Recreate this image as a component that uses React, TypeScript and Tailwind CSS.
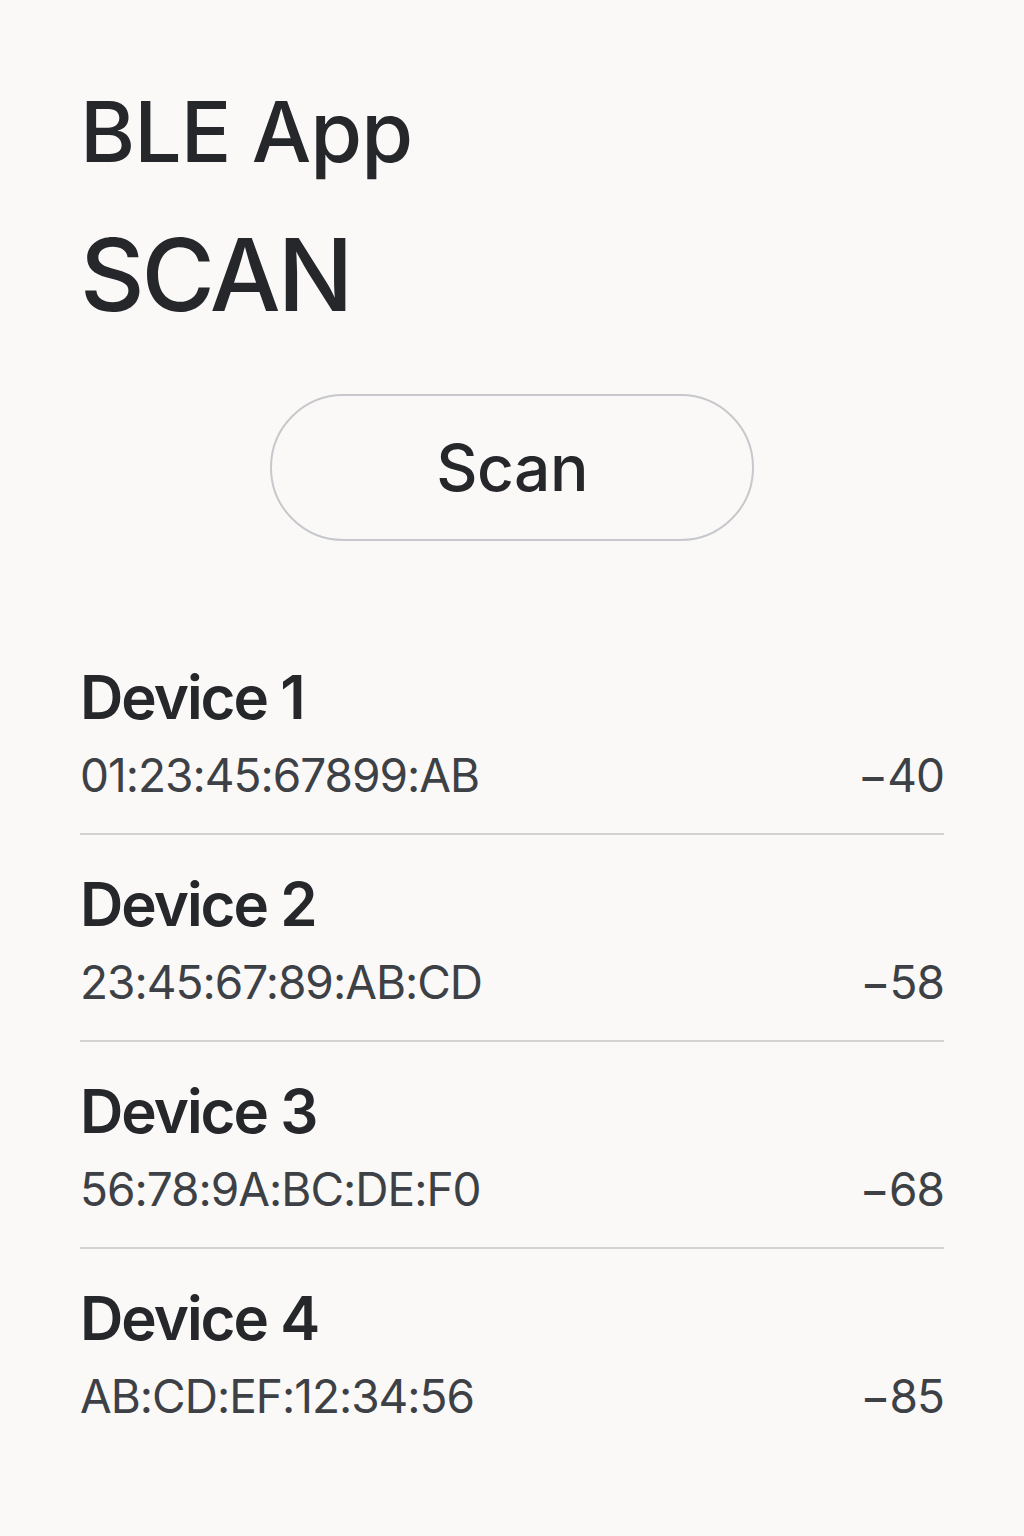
const devices = [
  { name: "Device 1", mac: "01:23:45:67899:AB", rssi: "−40" },
  { name: "Device 2", mac: "23:45:67:89:AB:CD", rssi: "−58" },
  { name: "Device 3", mac: "56:78:9A:BC:DE:F0", rssi: "−68" },
  { name: "Device 4", mac: "AB:CD:EF:12:34:56", rssi: "−85" },
];

export default function App() {
  return (
    <div
      className="min-h-[1536px] w-full bg-[#faf9f7] text-[#25272a] px-20 pt-[82px]"
      style={{ fontFamily: "Inter, 'Noto Sans', sans-serif" }}
    >
      {/* header */}
      <h1 className="text-[84px] font-medium leading-[100px] tracking-[-1px]">BLE App</h1>
      <h2 className="mt-[38px] text-[100px] font-medium leading-[110px] tracking-[-3px]">SCAN</h2>

      {/* scan button */}
      <div className="mt-[64px] flex justify-center">
        <button className="h-[147px] w-[484px] rounded-full border-2 border-[#c6c8cb] bg-[#faf9f8] text-[64px] font-medium tracking-[-0.5px] text-[#25272a]">
          Scan
        </button>
      </div>

      {/* device list */}
      <ul className="mt-[120px]">
        {devices.map((d, i) => (
          <li
            key={d.name}
            className={
              i < devices.length - 1
                ? "border-b-2 border-[#d3d3d3] pb-[30px] mb-[33px]"
                : "pb-[30px]"
            }
          >
            <div className="text-[60px] font-semibold leading-[72px] tracking-[-2px]">{d.name}</div>
            <div className="mt-[14px] flex items-center justify-between text-[46px] leading-[56px] text-[#3d4146] tracking-[-1px]">
              <span>{d.mac}</span>
              <span>{d.rssi}</span>
            </div>
          </li>
        ))}
      </ul>
    </div>
  );
}
